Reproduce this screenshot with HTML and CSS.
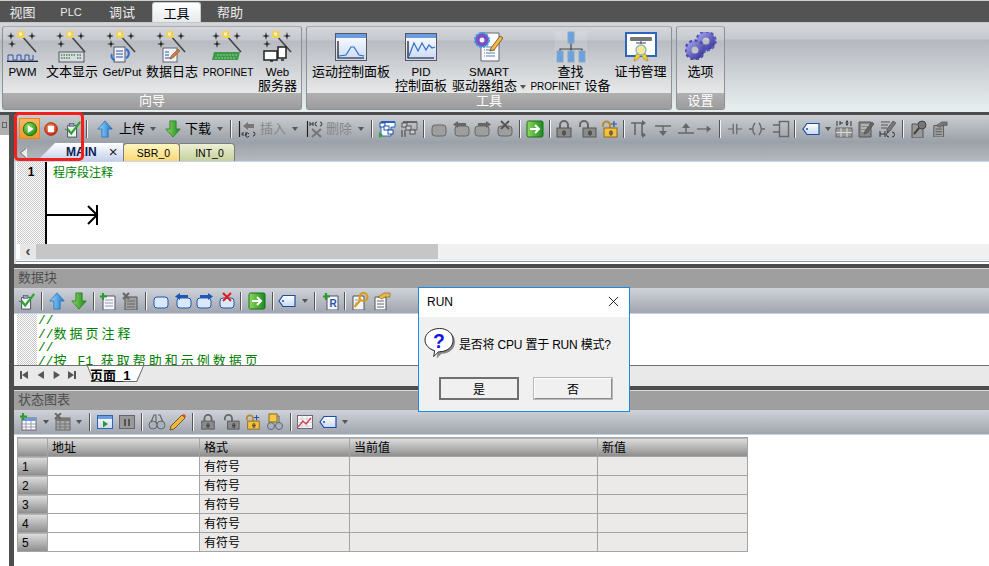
FILE: index.html
```html
<!DOCTYPE html>
<html lang="zh">
<head>
<meta charset="utf-8">
<title>STEP 7-Micro/WIN SMART</title>
<link rel="stylesheet" href="styles.css">
</head>
<body>
<svg class="defs" xmlns="http://www.w3.org/2000/svg">
  <defs>
    <radialGradient id="gGreen" cx=".4" cy=".35" r=".7"><stop offset="0" stop-color="#8fe060"/><stop offset="1" stop-color="#1d8a12"/></radialGradient>
    <radialGradient id="gRed" cx=".4" cy=".35" r=".7"><stop offset="0" stop-color="#f68a60"/><stop offset="1" stop-color="#c82a08"/></radialGradient>
    <linearGradient id="gUp" x1="0" y1="0" x2="1" y2="0"><stop offset="0" stop-color="#9fd8f8"/><stop offset="1" stop-color="#1c78d0"/></linearGradient>
    <linearGradient id="gDown" x1="0" y1="0" x2="1" y2="0"><stop offset="0" stop-color="#90d860"/><stop offset="1" stop-color="#1a8a20"/></linearGradient>
    <linearGradient id="gWin" x1="0" y1="0" x2="0" y2="1"><stop offset="0" stop-color="#fff"/><stop offset="1" stop-color="#c8d8f4"/></linearGradient>
    <linearGradient id="gGear" x1="0" y1="0" x2="1" y2="1"><stop offset="0" stop-color="#9a9ae8"/><stop offset="1" stop-color="#3d3d9c"/></linearGradient>

    <symbol id="wand" viewBox="0 0 34 32">
      <path d="M5 1l.8 3.2L9 5l-3.2.8L5 9l-.8-3.2L1 5l3.2-.8zM26 1l.8 3.2L30 5l-3.2.8L26 9l-.8-3.2L22 5l3.2-.8zM6 9l.8 3.2L10 13l-3.2.8L6 17l-.8-3.2L2 13l3.2-.8z" fill="#222"/>
      <path d="M15 4l15 17" stroke="#444" stroke-width="1.6"/>
      <rect x="11.500" y="0" width="7" height="7" fill="#f4d050"/>
      <rect x="13" y="1.500" width="3" height="3" fill="#fff4b0"/>
    </symbol>
    <symbol id="win-a" viewBox="0 0 32 28">
      <rect x=".5" y=".5" width="31" height="27" fill="url(#gWin)" stroke="#556"/>
      <rect x="1" y="1" width="30" height="4" fill="#6c9ce0"/>
      <path d="M3 8v17h26" fill="none" stroke="#111" stroke-width="1.2"/>
      <path d="M4 23l7-1 5-8h3l5 8 5 1" fill="none" stroke="#2f6ec8" stroke-width="1.200"/>
    </symbol>
    <symbol id="win-b" viewBox="0 0 32 28">
      <rect x=".5" y=".5" width="31" height="27" fill="url(#gWin)" stroke="#556"/>
      <rect x="1" y="1" width="30" height="4" fill="#6c9ce0"/>
      <path d="M3 8v17h26" fill="none" stroke="#111" stroke-width="1.2"/>
      <path d="M4 23l5-13 4 8 4-8 4 7 3-5 3 3 3-1" fill="none" stroke="#2f6ec8" stroke-width="1.200"/>
    </symbol>
    <symbol id="smart" viewBox="0 0 32 32">
      <path d="M8 2h18v28H8z" fill="#f8fafc" stroke="#667"/>
      <path d="M13 16h9M13 19h9M13 22h9M13 25h9" stroke="#5d7fb0" stroke-width="1.200"/>
      <path d="M11 16h1M11 19h1M11 22h1M11 25h1" stroke="#5d7fb0"/>
      <circle cx="9" cy="9" r="7" fill="#7a4fc4" stroke="#3f9ae0" stroke-width="2" stroke-dasharray="2.500 1.200"/>
      <circle cx="9" cy="9" r="2.500" fill="#f4f4ff"/>
      <path d="M18 17l9-12 3 2-9 12-4 1z" fill="#f2b84a" stroke="#6b4a10" stroke-width=".8"/>
    </symbol>
    <symbol id="tree" viewBox="0 0 32 32">
      <rect x="0" y="0" width="32" height="32" fill="#fff" opacity=".12"/>
      <path d="M16 11v7M5 20v-2h22v2M16 18v2" fill="none" stroke="#444" stroke-width="1.200"/>
      <rect x="13" y="1" width="6" height="11" fill="#6aa0e4" stroke="#8ab"/>
      <rect x="2" y="20" width="6" height="11" fill="#6aa0e4" stroke="#8ab"/>
      <rect x="13" y="20" width="6" height="11" fill="#6aa0e4" stroke="#8ab"/>
      <rect x="24" y="20" width="6" height="11" fill="#6aa0e4" stroke="#8ab"/>
    </symbol>
    <symbol id="cert" viewBox="0 0 32 30">
      <rect x="1" y="1" width="30" height="23" fill="#fff" stroke="#2d66b8" stroke-width="2"/>
      <rect x="5" y="5" width="22" height="4" rx="1" fill="#777"/>
      <path d="M11 11h10M16 9v3" stroke="#444"/>
      <path d="M11 22l-2 7 4-2 3-4zM21 22l2 7-4-2-3-4z" fill="#f2d030" stroke="#a08010" stroke-width=".6"/>
      <circle cx="16" cy="18" r="5" fill="#f8e890" stroke="#8ab4d8" stroke-width="1.400"/>
    </symbol>
    <symbol id="gears" viewBox="0 0 32 28">
      <circle cx="21" cy="9" r="6.500" fill="none" stroke="url(#gGear)" stroke-width="6"/>
      <circle cx="21" cy="9" r="9.500" fill="none" stroke="#5a5abc" stroke-width="2.400" stroke-dasharray="3 2.500"/>
      <circle cx="10" cy="18" r="6.500" fill="none" stroke="url(#gGear)" stroke-width="6"/>
      <circle cx="10" cy="18" r="9.500" fill="none" stroke="#4f4fb0" stroke-width="2.400" stroke-dasharray="3 2.500"/>
    </symbol>
    <symbol id="i-run" viewBox="0 0 20 20">
      <circle cx="10" cy="10" r="7.500" fill="url(#gGreen)" stroke="#177014"/>
      <path d="M7.500 5.500l6.500 4.500-6.500 4.500z" fill="#fff"/>
    </symbol>
    <symbol id="i-stop" viewBox="0 0 20 20">
      <circle cx="10" cy="10" r="7" fill="url(#gRed)" stroke="#a82208"/>
      <rect x="6.500" y="6.500" width="7" height="7" rx="1" fill="#fff"/>
    </symbol>
    <symbol id="i-check" viewBox="0 0 20 20">
      <path d="M4 6h10v13H4z" fill="#f0f4fa" stroke="#445"/>
      <rect x="6" y="4" width="5" height="3" fill="#8ca0c0" stroke="#445" stroke-width=".6"/>
      <path d="M1 10l4 2" stroke="#555" stroke-width="1"/>
      <path d="M4 10l4 5L18 2" fill="none" stroke="#2aa52a" stroke-width="2.400"/>
    </symbol>
    <symbol id="i-up" viewBox="0 0 20 20">
      <path d="M10 1l8 9h-4.500v9h-7v-9H2z" fill="url(#gUp)" stroke="#1a68b8" stroke-width=".8"/>
    </symbol>
    <symbol id="i-down" viewBox="0 0 20 20">
      <path d="M10 19l8-9h-4.500V1h-7v9H2z" fill="url(#gDown)" stroke="#1a7a1a" stroke-width=".8"/>
    </symbol>
    <symbol id="i-ins" viewBox="0 0 18 18">
      <path d="M1.500 1v16" stroke="#222" stroke-width="1.200"/>
      <path d="M3 14h2M5 12v4M8 12v4M8 14h1M11 14a2 2 0 1 0 .1 2M15 12a2 2 0 1 1-.1 4" fill="none" stroke="#333"/>
      <path d="M5 6l5-4v2h6v4h-6v2z" fill="#777"/>
    </symbol>
    <symbol id="i-del" viewBox="0 0 18 18">
      <path d="M1.500 1v16" stroke="#222" stroke-width="1.200"/>
      <path d="M4 2v4M7 2v4M4 4h3M11 2a2 2 0 1 0 .1 4M14 2a2 2 0 1 1-.1 4" fill="none" stroke="#333"/>
      <path d="M6 9l9 8M15 9l-9 8" stroke="#777" stroke-width="2.200"/>
    </symbol>
    <symbol id="i-net" viewBox="0 0 18 18">
      <path d="M3 2h14v5h-4v9H3z" fill="#fff" stroke="#2a62c0"/>
      <rect x="3" y="1" width="14" height="2" fill="#2a62c0"/>
      <rect x="2" y="3" width="5" height="4" fill="#fff" stroke="#1c4ea8"/>
      <rect x="6" y="6" width="5" height="4" fill="#fff" stroke="#1c4ea8"/>
      <rect x="10" y="10" width="5" height="4" fill="#fff" stroke="#1c4ea8"/>
      <path d="M1 12l4 3-4 3z" fill="#2fa52f"/>
    </symbol>
    <symbol id="i-netg" viewBox="0 0 18 18">
      <path d="M3 2h14v8h-4" fill="none" stroke="#666"/>
      <rect x="3" y="1" width="14" height="2" fill="#666"/>
      <rect x="2" y="3" width="5" height="4" fill="#ccc" stroke="#555"/>
      <rect x="6" y="6" width="5" height="4" fill="#ccc" stroke="#555"/>
      <rect x="10" y="10" width="5" height="4" fill="#ccc" stroke="#555"/>
      <path d="M2 10v7M5 10v7" stroke="#666" stroke-width="1.500"/>
    </symbol>
    <symbol id="i-rect" viewBox="0 0 18 18">
      <rect x="2" y="5" width="14" height="11" rx="3" fill="var(--f)" stroke="currentColor"/>
    </symbol>
    <symbol id="i-rl" viewBox="0 0 18 18">
      <rect x="3" y="6" width="14" height="10" rx="3" fill="var(--f)" stroke="currentColor"/>
      <path d="M1 4.500l5-3.500v2h8v3h-8v2z" fill="currentColor"/>
    </symbol>
    <symbol id="i-rr" viewBox="0 0 18 18">
      <rect x="1" y="6" width="14" height="10" rx="3" fill="var(--f)" stroke="currentColor"/>
      <path d="M17 4.500L12 1v2H4v3h8v2z" fill="currentColor"/>
    </symbol>
    <symbol id="i-rx" viewBox="0 0 18 18">
      <rect x="2" y="6" width="14" height="10" rx="3" fill="var(--f)" stroke="currentColor"/>
      <path d="M5 1l8 8M13 1l-8 8" stroke="var(--x)" stroke-width="1.800"/>
    </symbol>
    <symbol id="i-go" viewBox="0 0 18 18">
      <rect x="1" y="1" width="16" height="16" rx="1.500" fill="url(#gDown)" stroke="#167016"/>
      <path d="M4 9h8M9 5l4 4-4 4" fill="none" stroke="#fff" stroke-width="2"/>
    </symbol>
    <symbol id="i-lock" viewBox="0 0 18 18">
      <path d="M5 8V5a4 4 0 0 1 8 0v3" fill="none" stroke="#666" stroke-width="2"/>
      <rect x="2" y="8" width="14" height="9" fill="#8b8b8b" stroke="#555"/>
      <path d="M8 11h2v4H8zM7 13h4" stroke="#333" stroke-width=".8" fill="none"/>
    </symbol>
    <symbol id="i-unlock" viewBox="0 0 18 18">
      <path d="M1 7V5a4 4 0 0 1 8 0v3" fill="none" stroke="#666" stroke-width="2"/>
      <rect x="4" y="8" width="13" height="9" fill="#8b8b8b" stroke="#555"/>
      <path d="M10 11h2v4h-2zM9 13h4" stroke="#333" stroke-width=".8" fill="none"/>
    </symbol>
    <symbol id="i-lockadd" viewBox="0 0 18 18">
      <path d="M2 7V5a3.500 3.500 0 0 1 7 0v3" fill="none" stroke="#b58a30" stroke-width="2"/>
      <rect x="3" y="8" width="13" height="9" fill="#f4c040" stroke="#8a6a18"/>
      <path d="M9 11h2v4H9zM8 13h4" stroke="#333" stroke-width=".8" fill="none"/>
      <path d="M13 1v6M10 4h6" stroke="#2a52a8" stroke-width="1.200"/>
    </symbol>
    <symbol id="i-b1" viewBox="0 0 18 18">
      <path d="M1 3h11v12h3M5 3v12" fill="none" stroke="#666" stroke-width="1.600"/>
      <path d="M12 0l4 3-4 3zM12 12l4 3-4 3z" fill="#666"/>
    </symbol>
    <symbol id="i-b2" viewBox="0 0 18 18">
      <path d="M1 6h16M9 6v6" stroke="#666" stroke-width="1.400"/>
      <path d="M5 11h8l-4 5z" fill="#666"/>
    </symbol>
    <symbol id="i-b3" viewBox="0 0 18 18">
      <path d="M1 13h16M9 13V8" stroke="#666" stroke-width="1.400"/>
      <path d="M5 8h8L9 3z" fill="#666"/>
    </symbol>
    <symbol id="i-b4" viewBox="0 0 18 18">
      <path d="M1 9h12" stroke="#666" stroke-width="1.400"/>
      <path d="M12 5l5 4-5 4z" fill="#666"/>
    </symbol>
    <symbol id="i-contact" viewBox="0 0 18 18">
      <path d="M1 9h6M11 9h6M7 3v12M11 3v12" stroke="#666" stroke-width="1.400"/>
    </symbol>
    <symbol id="i-coil" viewBox="0 0 18 18">
      <path d="M1 9h3M14 9h3M7 3a9 9 0 0 0 0 12M11 3a9 9 0 0 1 0 12" fill="none" stroke="#666" stroke-width="1.400"/>
    </symbol>
    <symbol id="i-box" viewBox="0 0 18 18">
      <path d="M0 5h6M0 12h6" stroke="#666" stroke-width="1.400"/>
      <rect x="6.500" y="1.500" width="9" height="15" fill="none" stroke="#666" stroke-width="1.400"/>
    </symbol>
    <symbol id="i-tag" viewBox="0 0 18 14">
      <path d="M1 7l4-5.500h12v11H5z" fill="url(#gWin)" stroke="#1c4ea8" stroke-width="1.200"/>
      <circle cx="5" cy="7" r="1" fill="#1c4ea8"/>
    </symbol>
    <symbol id="i-nettab" viewBox="0 0 18 18">
      <path d="M2 1v5M16 1v5M5 1v4M5 3h3M13 1a2 2 0 0 0 0 4M11 1a2 2 0 0 1 0 4" fill="none" stroke="#333"/>
      <rect x="1" y="8" width="16" height="9" fill="#999" stroke="#666"/>
      <path d="M1 12.500h16M6 8v9M12 8v9" stroke="#ddd"/>
    </symbol>
    <symbol id="i-note" viewBox="0 0 18 18">
      <path d="M2 2h12v15H2z" fill="#888" stroke="#555"/>
      <path d="M4 5h8M4 8h6M4 11h5" stroke="#ddd"/>
      <path d="M8 11l7-9 2 2-7 9-3 1z" fill="#666" stroke="#444" stroke-width=".6"/>
    </symbol>
    <symbol id="i-note2" viewBox="0 0 18 18">
      <path d="M2 2h9M2 5h7M2 8h6" stroke="#555"/>
      <path d="M8 9l6-8 3 2-6 8-3 1z" fill="#777" stroke="#444" stroke-width=".6"/>
      <path d="M1 11v6M6 11v6M1 14h5M10 12a2 2 0 0 0 0 5M13 12a2 2 0 0 1 0 5" fill="none" stroke="#333"/>
    </symbol>
    <symbol id="i-keyg" viewBox="0 0 18 18">
      <path d="M2 4h11v14H2z" fill="#999" stroke="#555"/>
      <circle cx="12" cy="5" r="4" fill="#777" stroke="#444"/>
      <path d="M9 8l-5 6" stroke="#444" stroke-width="2"/>
    </symbol>
    <symbol id="i-handg" viewBox="0 0 18 18">
      <path d="M2 5h11v13H2z" fill="#a0a0a0" stroke="#555"/>
      <path d="M4 9h7M4 12h7M4 15h7" stroke="#555"/>
      <path d="M5 5l6-4h6v4h-5l-3 2z" fill="#777" stroke="#444" stroke-width=".6"/>
    </symbol>
    <symbol id="i-key" viewBox="0 0 18 18">
      <path d="M2 4h11v14H2z" fill="#f4f4f4" stroke="#555"/>
      <path d="M4 8h5M4 11h3" stroke="#99a"/>
      <circle cx="12.500" cy="5" r="4" fill="none" stroke="#d89a20" stroke-width="2.200"/>
      <path d="M9.500 8l-6 7" stroke="#d89a20" stroke-width="2.200"/>
    </symbol>
    <symbol id="i-hand" viewBox="0 0 18 18">
      <path d="M2 5h11v13H2z" fill="#f8f8f8" stroke="#555"/>
      <path d="M4 9h7M4 12h7M4 15h7" stroke="#667"/>
      <path d="M5 5l6-4h6v4h-5l-3 2z" fill="#e8b848" stroke="#7a5a10" stroke-width=".6"/>
    </symbol>
    <symbol id="i-docadd" viewBox="0 0 18 18">
      <path d="M4 4h12v14H4z" fill="#f4f6fa" stroke="#556"/>
      <path d="M6 8h8M6 11h8M6 14h8" stroke="#99a"/>
      <path d="M4 1v7M1 4.500h7" stroke="#2c9a2c" stroke-width="2.200"/>
    </symbol>
    <symbol id="i-docdel" viewBox="0 0 18 18">
      <path d="M4 5h12v13H4z" fill="#a0a0a0" stroke="#555"/>
      <path d="M6 9h8M6 12h8M6 15h8" stroke="#666"/>
      <path d="M2 1l6 6M8 1L2 7" stroke="#666" stroke-width="2"/>
    </symbol>
    <symbol id="i-docr" viewBox="0 0 18 18">
      <path d="M5 4h11v14H5z" fill="#f4f6fa" stroke="#556"/>
      <text x="7.500" y="15" class="svg-r">R</text>
      <path d="M4 1v7M1 4.500h7" stroke="#2c9a2c" stroke-width="2.200"/>
    </symbol>
    <symbol id="i-tadd" viewBox="0 0 18 18">
      <rect x="3" y="5" width="14" height="12" fill="#fff" stroke="#667"/>
      <rect x="3" y="5" width="14" height="3" fill="#6c9ce0"/>
      <path d="M3 11h14M3 14h14M7 8v9M12 8v9" stroke="#99a"/>
      <path d="M4 0v7M1 3.500h7" stroke="#2c9a2c" stroke-width="2.200"/>
    </symbol>
    <symbol id="i-tdel" viewBox="0 0 18 18">
      <rect x="3" y="5" width="14" height="12" fill="#a8a8a8" stroke="#666"/>
      <rect x="3" y="5" width="14" height="3" fill="#777"/>
      <path d="M3 11h14M3 14h14M7 8v9M12 8v9" stroke="#777"/>
      <path d="M2 0l6 6M8 0L2 6" stroke="#666" stroke-width="1.800"/>
    </symbol>
    <symbol id="i-play" viewBox="0 0 18 18">
      <rect x="1.500" y="2.500" width="15" height="13" fill="url(#gWin)" stroke="#2d66b8"/>
      <rect x="2" y="3" width="14" height="3" fill="#6c9ce0"/>
      <path d="M7 7.500l5 3.500-5 3.500z" fill="#2a9a2a"/>
    </symbol>
    <symbol id="i-pause" viewBox="0 0 18 18">
      <rect x="1.500" y="2.500" width="15" height="13" fill="#9a9a9a" stroke="#666"/>
      <path d="M7 6v7M11 6v7" stroke="#555" stroke-width="2"/>
    </symbol>
    <symbol id="i-glass" viewBox="0 0 18 18">
      <circle cx="5" cy="12" r="4" fill="#a6b2c0" stroke="#666"/>
      <circle cx="13" cy="12" r="4" fill="#a6b2c0" stroke="#666"/>
      <path d="M3 9l3-7h2v8M15 9l-3-7h-2" fill="none" stroke="#666" stroke-width="1.200"/>
    </symbol>
    <symbol id="i-pen" viewBox="0 0 18 18">
      <path d="M2 13L13 2l3 3L5 16l-4 1z" fill="#f0b840" stroke="#5a4010" stroke-width=".8"/>
      <path d="M13 2l3 3 1-2-2-2z" fill="#d84a30"/>
    </symbol>
    <symbol id="i-glock" viewBox="0 0 18 18">
      <rect x="3" y="1" width="8" height="8" fill="#f4c848" stroke="#8a6a18"/>
      <circle cx="5" cy="13" r="3.500" fill="#a6b2c0" stroke="#666"/>
      <circle cx="13" cy="13" r="3.500" fill="#a6b2c0" stroke="#666"/>
      <path d="M13 10V3h-2" fill="none" stroke="#666"/>
    </symbol>
    <symbol id="i-chart" viewBox="0 0 18 18">
      <rect x="1.500" y="2.500" width="15" height="13" fill="#f8f8f8" stroke="#667"/>
      <path d="M1.500 6h15M1.500 9.500h15M1.500 13h15M6 2.500v13M11 2.500v13" stroke="#bbc" stroke-width=".6"/>
      <path d="M2 14l5-6 3 3 5-6" fill="none" stroke="#d84040" stroke-width="1.300"/>
    </symbol>
  </defs>
</svg>

<div class="app">
  <nav class="menu">
    <span class="mtab w45">视图</span>
    <span class="mtab w52 latin">PLC</span>
    <span class="mtab w50">调试</span>
    <span class="mtab active">工具</span>
    <span class="mtab w58">帮助</span>
  </nav>

  <section class="ribbon">
    <div class="group g1">
      <div class="gbody">
        <div class="rb w39"><svg class="ric"><use href="#wand"/><path d="M2 30V24h5v5h4v-5h4v5h4v-5h4v5h4v-5M1 30h31" fill="none" stroke="#2a52a8"/><path d="M1 30.500h31" stroke="#222"/></svg><span class="rt"><span class="lt">PWM</span></span></div>
        <div class="rb w60"><svg class="ric"><use href="#wand"/><rect x="4" y="21" width="25" height="10" fill="#d8dce0" stroke="#556"/><path d="M6 24h14M6 27h10M22 24h5M22 27h5" stroke="#4b8a4b" stroke-dasharray="1.500 1" stroke-width="1.500"/></svg><span class="rt">文本显示</span></div>
        <div class="rb w40"><svg class="ric"><use href="#wand"/><rect x="9" y="16" width="11" height="15" fill="#eef2f8" stroke="#556"/><path d="M11 20h7M11 23h7M11 26h7" stroke="#2a52a8"/><path d="M21 18a5 5 0 0 1 0 9" fill="none" stroke="#2f70d0" stroke-width="2"/><path d="M7 23a4 4 0 0 0 3 6" fill="none" stroke="#2f70d0" stroke-width="2"/></svg><span class="rt"><span class="lt">Get/Put</span></span></div>
        <div class="rb w60"><svg class="ric"><use href="#wand"/><rect x="8" y="17" width="14" height="14" fill="#f0f4fa" stroke="#667"/><path d="M10 21h4M10 24h4M10 27h6" stroke="#2a52a8"/><path d="M16 25l7-7 2 2-7 7-3 1z" fill="#d87838" stroke="#553"  stroke-width=".5"/></svg><span class="rt">数据日志</span></div>
        <div class="rb w52"><svg class="ric"><use href="#wand"/><path d="M3 21h26l-2 8H1z" fill="#3e9a48"/><path d="M6 24h20M4 27h20" stroke="#8ed08e" stroke-dasharray="2 1"/></svg><span class="rt"><span class="lp">PROFINET</span></span></div>
        <div class="rb w47"><svg class="ric"><use href="#wand"/><rect x="3" y="20" width="13" height="9" fill="#fff" stroke="#222" stroke-width="1.500"/><rect x="17" y="16" width="8" height="11" fill="#fff" stroke="#222" stroke-width="1.500"/><path d="M9 30h3M20 29h3" stroke="#222" stroke-width="1.500"/></svg><span class="rt"><span class="lt">Web</span><br>服务器</span></div>
      </div>
      <div class="glabel">向导</div>
    </div>
    <div class="group g2">
      <div class="gbody">
        <div class="rb w88"><svg class="ric"><use href="#win-a" x="1" y="2" width="32" height="28"/></svg><span class="rt">运动控制面板</span></div>
        <div class="rb w52"><svg class="ric"><use href="#win-b" x="1" y="2" width="32" height="28"/></svg><span class="rt"><span class="lt">PID</span><br>控制面板</span></div>
        <div class="rb w84"><svg class="ric"><use href="#smart" x="1" y="0" width="32" height="32"/></svg><span class="rt"><span class="lt">SMART</span><br>驱动器组态<i class="dd small"></i></span></div>
        <div class="rb w79"><svg class="ric"><use href="#tree" x="1" y="0" width="32" height="32"/></svg><span class="rt">查找<br><span class="lp">PROFINET</span> 设备</span></div>
        <div class="rb w61"><svg class="ric"><use href="#cert" x="1" y="1" width="32" height="30"/></svg><span class="rt">证书管理</span></div>
      </div>
      <div class="glabel">工具</div>
    </div>
    <div class="group g3">
      <div class="gbody">
        <div class="rb w47"><svg class="ric"><use href="#gears" x="1" y="1" width="32" height="28"/></svg><span class="rt">选项</span></div>
      </div>
      <div class="glabel">设置</div>
    </div>
  </section>

  <div class="work">
    <aside class="side"><div class="side-head"><span class="pin"></span></div></aside>
    <div class="dock">
      <section class="editor">
        <div class="head">
          <div class="toolbar tb-main">
            <span class="c w21"><span class="hot"><svg class="i18"><use href="#i-run"/></svg></span></span>
            <span class="c w22"><svg class="i18"><use href="#i-stop"/></svg></span>
            <span class="c w21"><svg class="i18"><use href="#i-check"/></svg></span>
            <span class="c w8"><i class="sep"></i></span>
            <span class="c w28"><svg class="i18"><use href="#i-up"/></svg></span>
            <span class="c w26 tx">上传</span>
            <span class="c w16"><i class="dd"></i></span>
            <span class="c w24"><svg class="i18"><use href="#i-down"/></svg></span>
            <span class="c w26 tx">下载</span>
            <span class="c w18"><i class="dd"></i></span>
            <span class="c w4"><i class="sep"></i></span>
            <span class="c w27"><svg class="i18"><use href="#i-ins"/></svg></span>
            <span class="c w26 tx off">插入</span>
            <span class="c w18"><i class="dd"></i></span>
            <span class="c w22"><svg class="i18"><use href="#i-del"/></svg></span>
            <span class="c w26 tx off">删除</span>
            <span class="c w18"><i class="dd"></i></span>
            <span class="c w4"><i class="sep"></i></span>
            <span class="c w26"><svg class="i18"><use href="#i-net"/></svg></span>
            <span class="c w18"><svg class="i18"><use href="#i-netg"/></svg></span>
            <span class="c w12"><i class="sep"></i></span>
            <span class="c w18 gr"><svg class="i18"><use href="#i-rect"/></svg></span>
            <span class="c w26 gr"><svg class="i18"><use href="#i-rl"/></svg></span>
            <span class="c w18 gr"><svg class="i18"><use href="#i-rr"/></svg></span>
            <span class="c w26 gr"><svg class="i18"><use href="#i-rx"/></svg></span>
            <span class="c w4"><i class="sep"></i></span>
            <span class="c w26"><svg class="i18"><use href="#i-go"/></svg></span>
            <span class="c w4"><i class="sep"></i></span>
            <span class="c w24"><svg class="i18"><use href="#i-lock"/></svg></span>
            <span class="c w24"><svg class="i18"><use href="#i-unlock"/></svg></span>
            <span class="c w20"><svg class="i18"><use href="#i-lockadd"/></svg></span>
            <span class="c w8"><i class="sep"></i></span>
            <span class="c w22"><svg class="i18"><use href="#i-b1"/></svg></span>
            <span class="c w26"><svg class="i18"><use href="#i-b2"/></svg></span>
            <span class="c w20"><svg class="i18"><use href="#i-b3"/></svg></span>
            <span class="c w16"><svg class="i16"><use href="#i-b4"/></svg></span>
            <span class="c w16"><i class="sep"></i></span>
            <span class="c w14"><svg class="i16"><use href="#i-contact"/></svg></span>
            <span class="c w30"><svg class="i18"><use href="#i-coil"/></svg></span>
            <span class="c w20"><svg class="i18"><use href="#i-box"/></svg></span>
            <span class="c w6"><i class="sep"></i></span>
            <span class="c w26"><svg class="tagic"><use href="#i-tag"/></svg></span>
            <span class="c w8"><i class="dd"></i></span>
            <span class="c w24"><svg class="i18"><use href="#i-nettab"/></svg></span>
            <span class="c w20"><svg class="i18"><use href="#i-note"/></svg></span>
            <span class="c w24"><svg class="i18"><use href="#i-note2"/></svg></span>
            <span class="c w6"><i class="sep"></i></span>
            <span class="c w26"><svg class="i18"><use href="#i-keyg"/></svg></span>
            <span class="c w16"><svg class="i16"><use href="#i-handg"/></svg></span>
          </div>
          <div class="tabs">
            <span class="tab-back"></span>
            <span class="tab main"><b>MAIN</b><span class="tab-x">×</span></span>
            <span class="tab sbr">SBR_0</span>
            <span class="tab int">INT_0</span>
          </div>
        </div>
        <div class="ladder">
          <div class="netno">1</div>
          <div class="rungs">
            <div class="comment">程序段注释</div>
            <svg class="rung" viewBox="0 0 52 20"><path d="M0 10h50" stroke="#000" stroke-width="2"/><path d="M41 1l9 9-9 9" fill="none" stroke="#000" stroke-width="2"/><path d="M50 0v20" stroke="#000" stroke-width="2"/></svg>
          </div>
        </div>
        <div class="hscroll">
          <span class="sb-btn">‹</span>
          <span class="sb-thumb"></span>
          <span class="sb-rest"></span>
        </div>
        <div class="panel-foot"></div>
      </section>

      <section class="panel data">
        <div class="ptitle">数据块</div>
        <div class="toolbar tb-sub bl">
          <span class="c w20"><svg class="i18"><use href="#i-check"/></svg></span>
          <span class="c w10"><i class="sep"></i></span>
          <span class="c w20"><svg class="i18"><use href="#i-up"/></svg></span>
          <span class="c w24"><svg class="i18"><use href="#i-down"/></svg></span>
          <span class="c w6"><i class="sep"></i></span>
          <span class="c w22"><svg class="i18"><use href="#i-docadd"/></svg></span>
          <span class="c w22"><svg class="i18"><use href="#i-docdel"/></svg></span>
          <span class="c w10"><i class="sep"></i></span>
          <span class="c w20"><svg class="i18"><use href="#i-rect"/></svg></span>
          <span class="c w24"><svg class="i18"><use href="#i-rl"/></svg></span>
          <span class="c w20"><svg class="i18"><use href="#i-rr"/></svg></span>
          <span class="c w24"><svg class="i18"><use href="#i-rx"/></svg></span>
          <span class="c w4"><i class="sep"></i></span>
          <span class="c w28"><svg class="i18"><use href="#i-go"/></svg></span>
          <span class="c w4"><i class="sep"></i></span>
          <span class="c w24"><svg class="tagic"><use href="#i-tag"/></svg></span>
          <span class="c w12"><i class="dd"></i></span>
          <span class="c w8"><i class="sep"></i></span>
          <span class="c w24"><svg class="i18"><use href="#i-docr"/></svg></span>
          <span class="c w4"><i class="sep"></i></span>
          <span class="c w26"><svg class="i18"><use href="#i-key"/></svg></span>
          <span class="c w18"><svg class="i18"><use href="#i-hand"/></svg></span>
        </div>
        <div class="code">
          <div class="code-gutter"></div>
          <pre class="code-text"><span class="sl">//</span>
<span class="sl">//</span>数据页注释
<span class="sl">//</span>
<span class="sl">//</span>按<span class="sl"> F1 </span>获取帮助和示例数据页</pre>
        </div>
        <div class="pages">
          <span class="nav"><i class="nv first"></i><i class="nv prev"></i><i class="nv next"></i><i class="nv last"></i></span>
          <span class="page-tab"><b>页面_1</b></span>
        </div>
      </section>

      <section class="panel status">
        <div class="ptitle">状态图表</div>
        <div class="toolbar tb-sub">
          <span class="c w22"><svg class="i18"><use href="#i-tadd"/></svg></span>
          <span class="c w14"><i class="dd"></i></span>
          <span class="c w18"><svg class="i18"><use href="#i-tdel"/></svg></span>
          <span class="c w16"><i class="dd"></i></span>
          <span class="c w6"><i class="sep"></i></span>
          <span class="c w24"><svg class="i18"><use href="#i-play"/></svg></span>
          <span class="c w20"><svg class="i18"><use href="#i-pause"/></svg></span>
          <span class="c w10"><i class="sep"></i></span>
          <span class="c w20"><svg class="i18"><use href="#i-glass"/></svg></span>
          <span class="c w22"><svg class="i18"><use href="#i-pen"/></svg></span>
          <span class="c w8"><i class="sep"></i></span>
          <span class="c w22"><svg class="i16"><use href="#i-lock"/></svg></span>
          <span class="c w26"><svg class="i16"><use href="#i-unlock"/></svg></span>
          <span class="c w16"><svg class="i16"><use href="#i-lockadd"/></svg></span>
          <span class="c w28"><svg class="i18"><use href="#i-glock"/></svg></span>
          <span class="c w4"><i class="sep"></i></span>
          <span class="c w24"><svg class="i18"><use href="#i-chart"/></svg></span>
          <span class="c w22"><svg class="tagic"><use href="#i-tag"/></svg></span>
          <span class="c w12"><i class="dd"></i></span>
        </div>
        <div class="table-wrap">
          <table class="grid">
            <colgroup><col class="c-h"><col class="c-a"><col class="c-f"><col class="c-v"><col class="c-n"></colgroup>
            <thead><tr><th></th><th>地址</th><th>格式</th><th>当前值</th><th>新值</th></tr></thead>
            <tbody>
              <tr><th>1</th><td class="addr"></td><td>有符号</td><td></td><td></td></tr>
              <tr><th>2</th><td class="addr"></td><td>有符号</td><td></td><td></td></tr>
              <tr><th>3</th><td class="addr"></td><td>有符号</td><td></td><td></td></tr>
              <tr><th>4</th><td class="addr"></td><td>有符号</td><td></td><td></td></tr>
              <tr><th>5</th><td class="addr"></td><td>有符号</td><td></td><td></td></tr>
            </tbody>
          </table>
        </div>
      </section>
    </div>
  </div>

  <div class="redbox"></div>

  <div class="dialog">
    <div class="dlg-title"><span>RUN</span><svg class="dlg-x" viewBox="0 0 12 12"><path d="M1 1l10 10M11 1L1 11" stroke="#111" stroke-width="1"/></svg></div>
    <div class="dlg-body">
      <div class="dlg-msg">
        <svg class="dlg-ic" viewBox="0 0 32 32">
          <path d="M18 2c8 0 13 5 13 12s-6 12-13 12h-1l-5 5 1-6C6 23 2 19 2 14 2 7 9 2 18 2z" fill="#888" transform="translate(1 1)"/>
          <path d="M16 1c8 0 14 5 14 12s-6 12-14 12h-1l-5 5 1-6C5 22 1 18 1 13 1 6 8 1 16 1z" fill="#fff" stroke="#222"/>
          <text x="15.500" y="21" class="svg-q">?</text>
        </svg>
        <span class="dlg-text">是否将 CPU 置于 RUN 模式?</span>
      </div>
      <div class="dlg-btns">
        <button class="btn def">是</button>
        <button class="btn">否</button>
      </div>
    </div>
  </div>
</div>
</body>
</html>
```
FILE: styles.css
```css
* { box-sizing: border-box; }
html, body { margin: 0; padding: 0; }
body {
  width: 989px; height: 566px; overflow: hidden;
  font-family: "Liberation Sans", "Noto Sans CJK SC", sans-serif;
  font-size: 12px; color: #000; background: #fff;
}
.defs { position: absolute; width: 0; height: 0; }
.app { position: relative; width: 989px; height: 566px; display: flex; flex-direction: column; overflow: hidden; }

.w4{width:4px}.w6{width:6px}.w8{width:8px}.w10{width:10px}.w12{width:12px}.w14{width:14px}.w16{width:16px}.w18{width:18px}
.w20{width:20px}.w21{width:21px}.w22{width:22px}.w24{width:24px}.w26{width:26px}.w27{width:27px}.w28{width:28px}.w30{width:30px}
.w39{width:39px}.w40{width:40px}.w45{width:45px}.w47{width:47px}.w50{width:50px}.w52{width:52px}.w58{width:58px}.w60{width:60px}.w61{width:61px}.w79{width:79px}.w84{width:84px}.w88{width:88px}

/* menu */
.menu { height: 22px; flex: none; display: flex; background: #535353; border-top: 1px solid #cfcfcf; }
.mtab { display: flex; align-items: center; justify-content: center; color: #ececec; font-size: 13px; }
.mtab.latin { font-size: 11px; }
.mtab.active {
  width: 49px; margin: 1px 0 0 5px; color: #000;
  background: linear-gradient(#ffffff, #e4eaec);
  border: 1px solid #c6cccc; border-bottom: none; border-radius: 3px 3px 0 0;
}

/* ribbon */
.ribbon {
  height: 90px; flex: none; display: flex; gap: 4px; padding: 3px 0 2px 2px;
  background: linear-gradient(#d4d6db 0, #c6c9ce 16px, #b5b8c0 17px, #e6eded 84px, #e6eded 100%);
  border-top: 1px solid #c8c8c8;
}
.group {
  display: flex; flex-direction: column; border: 1px solid #8e9096; border-top-color: #a8aaae; border-radius: 3px;
  background: linear-gradient(#d4d6db 0, #c6c9ce 13px, #b8bbc2 14px, #e8eaea 68px);
}
.g1 { width: 300px; } .g2 { width: 366px; } .g3 { width: 49px; }
.gbody { flex: 1; display: flex; min-height: 0; padding-top: 4px; }
.rb { flex: none; display: flex; flex-direction: column; align-items: center; }
.ric { width: 34px; height: 32px; flex: none; display: block; }
.rt { margin-top: 2px; text-align: center; line-height: 14px; font-size: 13px; white-space: nowrap; }
.lt { font-size: 11.500px; }
.lp { font-size: 10px; }
.glabel {
  height: 16px; flex: none; text-align: center; line-height: 15px; color: #fff; font-size: 13px;
  background: linear-gradient(#b0b0b0, #9c9c9c);
}
.dd { display: inline-block; width: 0; height: 0; border: 3px solid transparent; border-top: 4px solid #555; border-bottom: 0; }
.dd.small { margin-left: 3px; vertical-align: middle; }

/* work */
.work { flex: 1; min-height: 0; display: flex; background: #4d4d4d; padding-top: 3px; }
.side { width: 9px; flex: none; background: #fff; }
.side-head { height: 20px; background: #aeb0b2; display: flex; align-items: center; justify-content: center; }
.pin { display: block; width: 5px; height: 6px; border: 1px solid #666; }
.dock { flex: 1; min-width: 0; margin-left: 5px; display: flex; flex-direction: column; gap: 4px; }

.editor { height: 149px; flex: none; display: flex; flex-direction: column; background: #fff; border-left: 2px solid #d8dbe4; }
.head { height: 47px; flex: none; background: linear-gradient(#cacdd1 0, #9ba1a8 27px, #b6babf 47px); margin-left: -2px; border-bottom: 1px solid #c8d4f0; }
.toolbar { display: flex; align-items: center; }
.tb-main { height: 27px; padding-left: 5px; }
.tb-sub { height: 25px; flex: none; padding-left: 3px; background: linear-gradient(#cfd2d8 0, #a0a5ae 100%); }
.c { flex: none; height: 22px; display: flex; align-items: center; justify-content: center; color: #666; --f: #9e9e9e; --x: #555; }
.bl .c { color: #1f58b4; --f: #dbe8fa; --x: #e01818; }
.gr { color: #666; }
.tx { font-size: 13px; color: #000; white-space: nowrap; padding-bottom: 2px; }
.tx.off { color: #868686; }
.sep { display: block; width: 2px; height: 18px; background: linear-gradient(90deg, #555 50%, #f4f4f4 50%); }
.i18 { width: 18px; height: 18px; display: block; flex: none; }
.i16 { width: 16px; height: 16px; display: block; flex: none; }
.tagic { width: 18px; height: 14px; display: block; flex: none; }
.hot { width: 21px; height: 21px; display: flex; align-items: center; justify-content: center; background: linear-gradient(#f8b868, #f09a30); border: 1px solid #e08a20; }

.tabs { height: 19px; display: flex; align-items: flex-end; padding-left: 8px; }
.tab-back { width: 16px; height: 18px; }
.tab-back::before { content: ""; display: block; width: 0; height: 0; margin: 5px 0 0 -1px; border: 5px solid transparent; border-left-width: 0; border-right: 6px solid #eee; filter: drop-shadow(-1px 0 0 #666); }
.tab { display: flex; align-items: center; justify-content: center; height: 18px; font-size: 10.500px; white-space: nowrap; }
.tab.main { width: 86px; margin-left: -1px; padding-left: 29px; justify-content: flex-start; clip-path: polygon(0 100%, 18px 0, 100% 0, 100% 100%); background: linear-gradient(#ffffff, #c3cfea); font-size: 12px; color: #0d1f55; }
.tab-x { margin-left: 12px; font-size: 15px; line-height: 14px; color: #222; }
.tab.sbr { width: 57px; padding-left: 4px; border: 1px solid #7c7c7c; border-bottom: none; border-radius: 4px 4px 0 0; background: linear-gradient(#fff6c0, #f8d877); }
.tab.int { width: 55px; padding-left: 5px; border: 1px solid #7c7c7c; border-bottom: none; border-left: none; border-radius: 0 4px 0 0; background: linear-gradient(#eef0d4, #c4d09c); }

.ladder { flex: 1; min-height: 0; display: flex; margin-left: 1px; }
.netno { width: 28px; flex: none; font-weight: bold; font-size: 12px; text-align: center; padding-top: 3px; background: repeating-conic-gradient(#c8c8c8 0 25%, #fff 0 50%) 0 0 / 2px 2px; }
.rungs { flex: 1; border-left: 2px solid #000; display: flex; flex-direction: column; }
.comment { padding: 4px 0 0 6px; color: #008000; font-size: 12px; line-height: 14px; }
.rung { width: 52px; height: 20px; margin-top: 25px; display: block; }
.hscroll { height: 15px; flex: none; display: flex; margin-left: 4px; }
.sb-btn { width: 16px; background: #e6e6e6; text-align: center; font-size: 15px; font-weight: bold; line-height: 13px; color: #444; }
.sb-thumb { width: 402px; background: #c6c6c6; }
.sb-rest { flex: 1; background: #f0f0f0; }
.panel-foot { height: 5px; flex: none; background: linear-gradient(#dfe6f8, #fff 50%, #9a9a9a 50%, #9a9a9a 70%, #fff 70%); }

.panel { display: flex; flex-direction: column; background: #fff; }
.data { height: 118px; flex: none; }
.status { flex: 1; min-height: 0; }
.ptitle { height: 20px; flex: none; background: #9e9f9e; color: #4e4e4e; font-size: 13px; line-height: 17px; padding-left: 4px; border-top: 1px solid #d8d8d8; }

.code { height: 52px; flex: none; display: flex; overflow: hidden; border-top: 1px solid #c5d0ee; }
.code-gutter { width: 20px; margin-left: 3px; flex: none; background: repeating-conic-gradient(#c8c8c8 0 25%, #fff 0 50%) 0 0 / 2px 2px; }
.code-text { margin: 0; padding-left: 1px; font-family: "Liberation Mono", "Noto Sans CJK SC", monospace; font-size: 13px; line-height: 13.700px; color: #008000; letter-spacing: 3px; white-space: pre; }
.sl { letter-spacing: 0; }
.pages { flex: 1; display: flex; background: #e9e9e9; border-top: 1px solid #707070; }
.nav { display: flex; gap: 8px; padding: 5px 0 0 6px; width: 73px; flex: none; }
.nv { display: block; width: 8px; height: 8px; background: #555; }
.first { clip-path: polygon(0 0, 2px 0, 2px 100%, 0 100%, 0 0, 2px 50%, 100% 0, 100% 100%, 2px 50%); }
.prev { clip-path: polygon(100% 0, 100% 100%, 20% 50%); }
.next { clip-path: polygon(20% 0, 20% 100%, 100% 50%); }
.last { clip-path: polygon(100% 0, 75% 0, 75% 100%, 100% 100%, 100% 0, 75% 50%, 0 0, 0 100%, 75% 50%); }
.page-tab { width: 57px; height: 16px; padding-left: 3px; position: relative; display: flex; align-items: center; }
.page-tab::before { content: ""; position: absolute; inset: 0; background: #707070; clip-path: polygon(0 0, 100% 0, 88% 100%, 11% 100%); }
.page-tab::after { content: ""; position: absolute; inset: 0 1px 1px; background: #fff; clip-path: polygon(0 0, 100% 0, 88% 100%, 11% 100%); }
.page-tab b { position: relative; z-index: 1; font-size: 13px; }

.status .tb-sub { height: 24px; }
.table-wrap { flex: 1; padding: 2px 0 0 3px; border-top: 1px solid #c5d0ee; }
.grid { border-collapse: collapse; table-layout: fixed; width: 731px; }
.c-h{width:30px}.c-a{width:152px}.c-f{width:150px}.c-v{width:248px}.c-n{width:150px}
.grid th, .grid td { height: 19px; padding: 1px 0 0 4px; border: 1px solid #a4a4a4; text-align: left; font-weight: normal; font-size: 12px; line-height: 16px; overflow: hidden; white-space: nowrap; }
.grid th { background: linear-gradient(#dedede, #8c8c8c); }
.grid td { background: #ebeae8; }
.grid td.addr { background: #fff; }

.redbox { position: absolute; left: 14px; top: 112px; width: 70px; height: 49px; border: 3px solid #f0201c; border-radius: 5px; }

.dialog { position: absolute; left: 418px; top: 287px; width: 212px; height: 125px; border: 1px solid #1c8ae2; background: #f0f0f0; display: flex; flex-direction: column; }
.dlg-title { height: 29px; flex: none; background: #fff; display: flex; align-items: center; justify-content: space-between; padding: 0 10px 2px 8px; }
.dlg-x { width: 11px; height: 11px; display: block; }
.dlg-body { flex: 1; display: flex; flex-direction: column; }
.dlg-msg { display: flex; align-items: center; gap: 4px; padding: 10px 0 0 5px; }
.dlg-text { letter-spacing: -.2px; }
.dlg-ic { width: 31px; height: 32px; flex: none; }
.dlg-btns { display: flex; gap: 14px; padding: 18px 0 0 20px; }
.btn { width: 80px; height: 23px; padding: 0; background: #f0f0f0; font: inherit; color: #000; border: 2px solid; border-color: #fff #8c8c8c #8c8c8c #fff; outline: 1px solid #b8b8b8; outline-offset: -1px; }
.btn.def { border: 2px solid #707070; outline: none; }

.svg-r { font: bold 10px "Liberation Sans", sans-serif; fill: #2a52a8; }
.svg-q { font: bold 20px "Liberation Sans", sans-serif; fill: #1414e0; text-anchor: middle; }
```
